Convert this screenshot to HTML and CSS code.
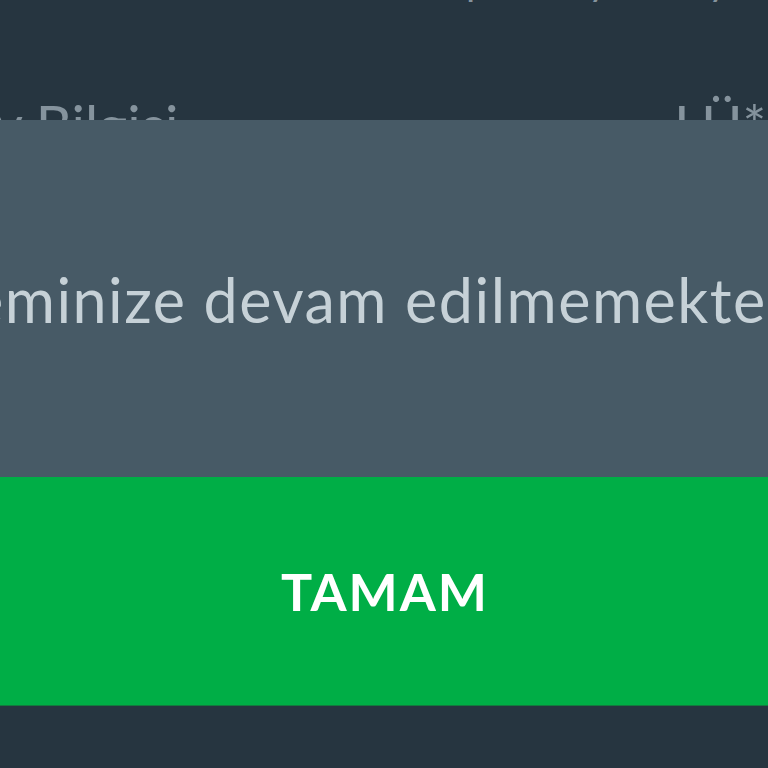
FILE: index.html
```html
<!DOCTYPE html>
<html lang="tr">
<head>
<meta charset="utf-8">
<link rel="stylesheet" href="styles.css">
</head>
<body>
<div class="screen">
  <div class="row row-top">
    <span class="g g1">p</span>
    <span class="g g2">y</span>
    <span class="g g3">y</span>
  </div>
  <div class="row row-info">
    <span class="label">y Bilgisi</span>
    <span class="value">LÜ**:</span>
  </div>
</div>
<div class="modal">
  <div class="message"><span class="msg-text">eminize devam edilmemektedir.</span></div>
  <div class="button">TAMAM</div>
</div>
</body>
</html>
```
FILE: styles.css
```css
html, body {
  margin: 0;
  padding: 0;
  width: 768px;
  height: 768px;
  overflow: hidden;
  background: #263540;
  font-family: Lato, "Noto Sans", sans-serif;
}
.screen {
  position: relative;
  height: 768px;
  overflow: hidden;
}
.row {
  display: flex;
  white-space: nowrap;
  color: #85939d;
}
.row-top {
  height: 40px;
  margin-top: -40px;
  position: relative;
  font-size: 40px;
}
.g {
  position: absolute;
  top: 0;
  line-height: 40px;
}
.g1 { left: 466px; }
.g2 { left: 588px; }
.g3 { left: 708px; }
.row-info {
  margin-top: 97px;
  justify-content: space-between;
  font-size: 56px;
  line-height: 56px;
}
.label { margin-left: -6px; }
.value { margin-right: -36px; }
.modal {
  position: absolute;
  top: 120px;
  left: 0;
  width: 768px;
  display: flex;
  flex-direction: column;
}
.message {
  height: 357px;
  background: #475a66;
  display: flex;
  align-items: center;
  overflow: hidden;
  white-space: nowrap;
}
.msg-text {
  font-size: 61px;
  color: #c6d1d7;
  margin-left: -29px;
  letter-spacing: 1.5px;
  padding-top: 2px;
}
.button {
  height: 228px;
  background: #00ae46;
  border-bottom: 1px solid #137a3e;
  display: flex;
  align-items: center;
  justify-content: center;
  color: #ffffff;
  font-weight: 700;
  font-size: 52px;
  letter-spacing: 2px;
  padding-left: 2px;
}
```
